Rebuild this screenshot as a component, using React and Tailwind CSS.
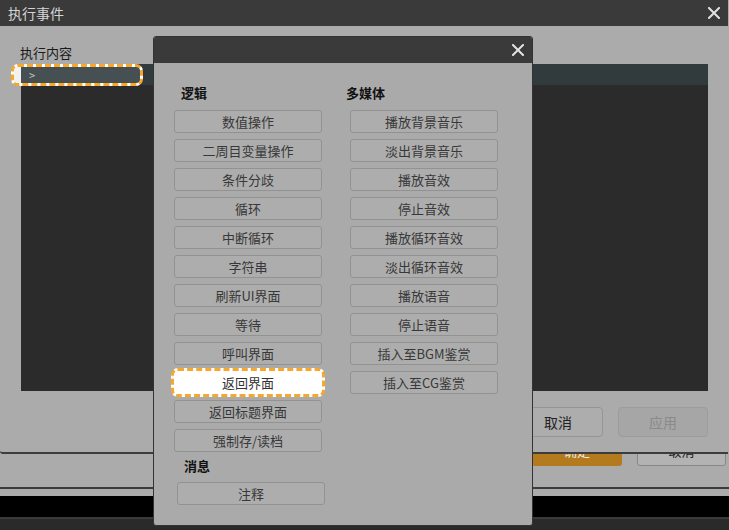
import React from 'react';

const FONT = { fontFamily: '"Noto Sans CJK SC", "Noto Sans", sans-serif' };

const logic = [
  '数值操作',
  '二周目变量操作',
  '条件分歧',
  '循环',
  '中断循环',
  '字符串',
  '刷新UI界面',
  '等待',
  '呼叫界面',
  '返回界面',
  '返回标题界面',
  '强制存/读档',
];

const media = [
  '播放背景音乐',
  '淡出背景音乐',
  '播放音效',
  '停止音效',
  '播放循环音效',
  '淡出循环音效',
  '播放语音',
  '停止语音',
  '插入至BGM鉴赏',
  '插入至CG鉴赏',
];

function CloseIcon({ size = 12 }) {
  return (
    <svg width={size} height={size} viewBox="0 0 12 12">
      <path d="M1 1 L11 11 M11 1 L1 11" stroke="#e2e2e2" strokeWidth="2" strokeLinecap="square" />
    </svg>
  );
}

function EventButton({ label, focused }) {
  if (focused) {
    return (
      <div className="relative h-[23px] w-[148px]">
        <div className="absolute -inset-[3px] rounded-[7px] border-[3px] border-dashed border-[#f7a72b] bg-white" />
        <div className="relative flex h-full items-center justify-center text-[13px] text-[#333]">{label}</div>
      </div>
    );
  }
  return (
    <div className="flex h-[23px] w-[148px] items-center justify-center rounded-[3px] border border-[#929292] bg-[#adadad] text-[13px] text-[#383838]">
      {label}
    </div>
  );
}

function OuterDialog() {
  return (
    <div className="absolute left-0 top-0 flex h-[454px] w-[728px] flex-col rounded-bl-[3px] border-b-2 border-[#3c3c3c] bg-[#ababab]">
      <div className="flex h-[26px] items-center justify-between bg-[#3a3a3a] pl-[8px] pr-[8px]">
        <span className="text-[14px] text-[#d4d4d4]">执行事件</span>
        <CloseIcon size={12} />
      </div>
      <div className="flex flex-col pl-[20px] pt-[18px]">
        <div className="h-[20px] text-[13px] leading-[18px] text-[#1a1a1a]">执行内容</div>
        <div className="relative ml-[1px] h-[327px] w-[687px] bg-[#2b2b2b]">
          <div className="h-[21px] w-full bg-[#313a3c]" />
          <div className="absolute left-[-10px] top-0 flex h-[22px] w-[132px] rounded-[7px] border-[3px] border-dashed border-[#f7a72b] bg-white">
            <div className="w-[7px] rounded-l-[4px] bg-[#f2f2f2]" />
            <div className="flex flex-1 items-center rounded-r-[4px] bg-[#465053] pl-[8px] text-[11px] text-[#c8c8c8]">
              &gt;
            </div>
          </div>
        </div>
        <div className="mt-[16px] flex w-[688px] justify-end gap-[15px]">
          <div className="flex h-[30px] w-[90px] items-center justify-center rounded-[4px] border border-[#959595] bg-[#adadad] text-[14px] text-[#222]">
            取消
          </div>
          <div className="flex h-[30px] w-[90px] items-center justify-center rounded-[4px] border border-[#9c9c9c] bg-[#a6a6a6] text-[14px] text-[#8a8a8a]">
            应用
          </div>
        </div>
      </div>
    </div>
  );
}

function InnerDialog() {
  return (
    <div className="absolute left-[153px] top-[36px] flex h-[490px] w-[380px] flex-col overflow-hidden rounded-[3px] border border-[#333] bg-[#aaaaaa]">
      <div className="flex h-[26px] items-center justify-end bg-[#3a3a3a] pr-[8px]">
        <CloseIcon size={12} />
      </div>
      <div className="flex gap-[25px] pl-[20px] pt-[21px]">
        <div className="flex flex-col">
          <div className="mb-[8px] ml-[7px] h-[18px] text-[13px] font-bold leading-[18px] text-[#111]">逻辑</div>
          <div className="flex flex-col gap-[6px]">
            {logic.map((l) => (
              <EventButton key={l} label={l} focused={l === '返回界面'} />
            ))}
          </div>
          <div className="ml-[10px] mt-[5px] h-[18px] text-[13px] font-bold leading-[18px] text-[#111]">消息</div>
          <div className="ml-[3px] mt-[7px]">
            <EventButton label="注释" />
          </div>
        </div>
        <div className="flex flex-col">
          <div className="mb-[8px] ml-[-4px] h-[18px] text-[13px] font-bold leading-[18px] text-[#111]">多媒体</div>
          <div className="flex flex-col gap-[6px]">
            {media.map((m) => (
              <EventButton key={m} label={m} />
            ))}
          </div>
        </div>
      </div>
    </div>
  );
}

export default function App() {
  return (
    <div className="relative h-[530px] w-[729px] overflow-hidden bg-[#2a2a2a]" style={FONT}>
      {/* page behind the dialogs */}
      <div className="flex h-[487px] flex-col justify-start bg-[#ababab] pt-[436px]">
        <div className="flex justify-end gap-[15px] pr-[3px]">
          <div className="flex h-[30px] w-[90px] items-center justify-center rounded-[3px] bg-[#b47a1e] text-[13px] text-[#eee]">
            确定
          </div>
          <div className="flex h-[30px] w-[89px] items-center justify-center rounded-[3px] border border-[#888] bg-[#b3b3b3] text-[13px] text-[#222]">
            取消
          </div>
        </div>
      </div>
      <div className="h-[2px] bg-[#3c3c3c]" />
      <div className="h-[7px] bg-[#ababab]" />
      <div className="h-[21px] bg-black" />
      <div className="h-[2px] bg-[#3a3a3a]" />

      <OuterDialog />
      <InnerDialog />
    </div>
  );
}
